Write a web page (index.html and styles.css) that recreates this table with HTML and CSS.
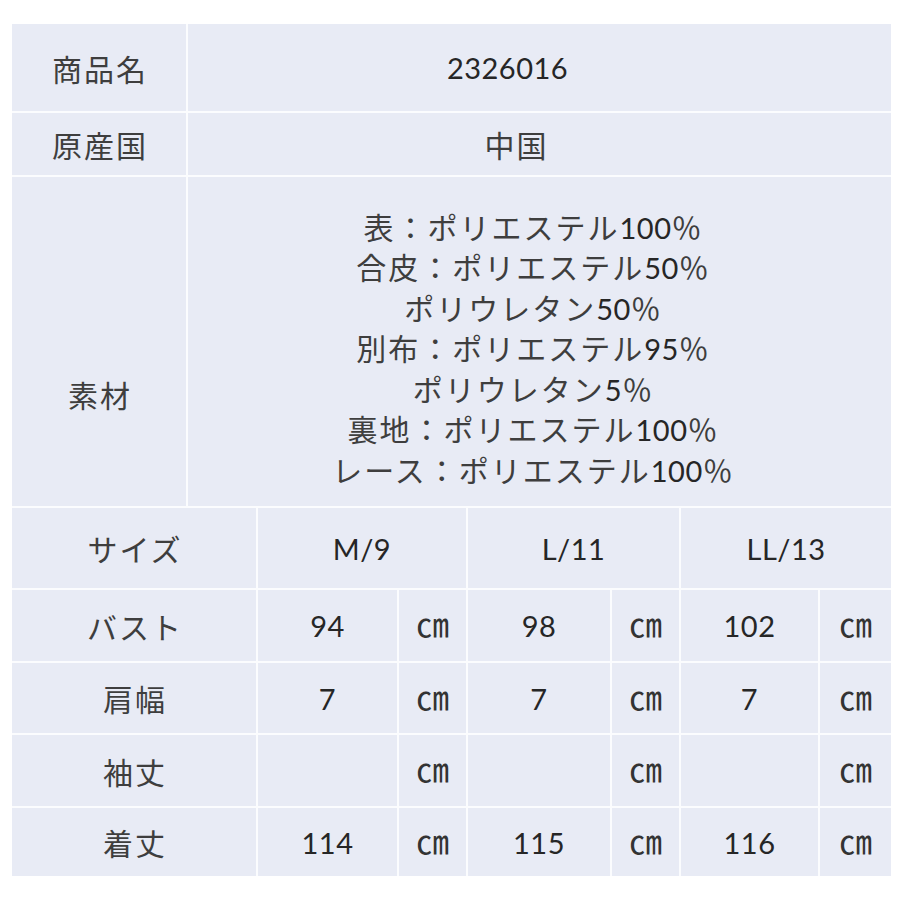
FILE: index.html
```html
<!DOCTYPE html>
<html lang="ja">
<head>
<meta charset="utf-8">
<link rel="stylesheet" href="styles.css">
</head>
<body>
<div class="sheet">
  <div class="cell head span-label-top">商品名</div>
  <div class="cell num span-value-top code">2326016</div>

  <div class="cell head span-label-top">原産国</div>
  <div class="cell head span-value-top origin">中国</div>

  <div class="cell head span-label-top material-label">素材</div>
  <div class="cell material span-value-top">
    <div>表：ポリエステル<span class="lat">100</span>％</div>
    <div>合皮：ポリエステル<span class="lat">50</span>％</div>
    <div>ポリウレタン<span class="lat">50</span>％</div>
    <div>別布：ポリエステル<span class="lat">95</span>％</div>
    <div>ポリウレタン<span class="lat">5</span>％</div>
    <div>裏地：ポリエステル<span class="lat">100</span>％</div>
    <div>レース：ポリエステル<span class="lat">100</span>％</div>
  </div>

  <div class="cell head span-label">サイズ</div>
  <div class="cell num span-size">M/9</div>
  <div class="cell num span-size">L/11</div>
  <div class="cell num span-size">LL/13</div>

  <div class="cell head span-label">バスト</div>
  <div class="cell num">94</div><div class="cell unit">㎝</div>
  <div class="cell num">98</div><div class="cell unit">㎝</div>
  <div class="cell num">102</div><div class="cell unit">㎝</div>

  <div class="cell head span-label">肩幅</div>
  <div class="cell num">7</div><div class="cell unit">㎝</div>
  <div class="cell num">7</div><div class="cell unit">㎝</div>
  <div class="cell num">7</div><div class="cell unit">㎝</div>

  <div class="cell head span-label">袖丈</div>
  <div class="cell num"></div><div class="cell unit">㎝</div>
  <div class="cell num"></div><div class="cell unit">㎝</div>
  <div class="cell num"></div><div class="cell unit">㎝</div>

  <div class="cell head span-label">着丈</div>
  <div class="cell num">114</div><div class="cell unit">㎝</div>
  <div class="cell num">115</div><div class="cell unit">㎝</div>
  <div class="cell num">116</div><div class="cell unit">㎝</div>
</div>
</body>
</html>
```

FILE: styles.css
```css
html, body {
  margin: 0;
  padding: 0;
  background: #ffffff;
}

body {
  padding: 24px 9px 24px 12px;
}

.sheet {
  width: 879px;
  height: 852px;
  display: grid;
  grid-template-columns: 174px 68px 139px 67px 142px 67px 137px 71px;
  grid-template-rows: 87px 62px 329px 80px 71px 70px 71px 68px;
  gap: 2px;
  background: #fbfcfe;
}

.cell {
  background: #e8ebf5;
  display: flex;
  align-items: center;
  justify-content: center;
  color: #3e3e3e;
  font-family: "Noto Sans CJK JP", sans-serif;
  font-size: 30px;
  line-height: 1;
}

.span-label-top { grid-column: 1 / 2; }
.span-value-top { grid-column: 2 / 9; }
.span-label { grid-column: 1 / 3; }
.span-size { grid-column: span 2; }

.head {
  letter-spacing: 2px;
  padding-left: 2px;
}

.code { padding-right: 64px; }
.origin { padding-right: 48px; }
.material-label { padding-top: 104px; }

.num, .lat {
  font-family: Lato, "Noto Sans", sans-serif;
  color: #262626;
  font-size: 29px;
  letter-spacing: 0.5px;
}

.material {
  flex-direction: column;
  padding-top: 14px;
  padding-right: 12px;
  line-height: 39.5px;
  font-size: 30px;
  letter-spacing: 2px;
  color: #3e3e3e;
}

.unit {
  font-size: 33px;
  color: #333;
  padding-bottom: 4px;
}
```
